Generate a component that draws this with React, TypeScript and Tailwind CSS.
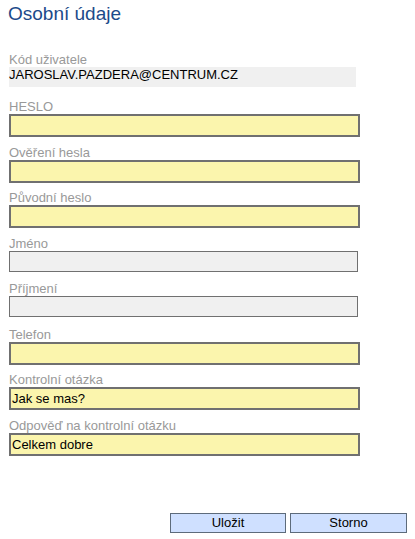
import React from "react";

type Field = { label: string; value?: string; kind: "edit" | "locked" };

const fields: Field[] = [
  { label: "HESLO", kind: "edit" },
  { label: "Ověření hesla", kind: "edit" },
  { label: "Původní heslo", kind: "edit" },
  { label: "Jméno", kind: "locked" },
  { label: "Příjmení", kind: "locked" },
  { label: "Telefon", kind: "edit" },
  { label: "Kontrolní otázka", value: "Jak se mas?", kind: "edit" },
  { label: "Odpověď na kontrolní otázku", value: "Celkem dobre", kind: "edit" },
];

function FormRow({ field }: { field: Field }) {
  return (
    <div className="h-[45.5px]">
      <div className="h-[15px] text-[13px] leading-[15px] text-[#999999]">{field.label}</div>
      {field.kind === "edit" ? (
        <input
          readOnly
          value={field.value ?? ""}
          className="block h-[23px] w-[351px] border-2 border-[#707070] bg-[#fbf5ad] px-px text-[13px] leading-[19px] text-black outline-none"
        />
      ) : (
        <input
          readOnly
          value=""
          className="block h-[21px] w-[349px] border border-[#707070] bg-[#f0f0f0] text-[13px] outline-none"
        />
      )}
    </div>
  );
}

export default function App() {
  return (
    <div className="h-[539px] w-[415px] bg-white font-['Liberation_Sans',Arial,sans-serif]">
      <div className="pl-[9px]">
        <h1 className="pt-[2px] -ml-[1px] text-[19px] leading-[24px] font-normal text-[#1c4a8a]">
          Osobní údaje
        </h1>

        <div className="mt-[27px]">
          <div className="h-[14px] text-[13px] leading-[14px] text-[#999999]">Kód uživatele</div>
          <div className="h-[20px] w-[347px] bg-[#f0f0f0] text-[13px] leading-[15px] text-black">
            JAROSLAV.PAZDERA@CENTRUM.CZ
          </div>
        </div>

        <div className="mt-[12px]">
          {fields.map((f) => (
            <FormRow key={f.label} field={f} />
          ))}
        </div>
      </div>

      <div className="mt-[50px] flex justify-end gap-[4px] pr-[8px]">
        <button className="h-[20px] w-[116px] border border-[#5d6b7b] bg-[#cfe0ff] text-[13px] leading-[18px] font-normal text-black">
          Uložit
        </button>
        <button className="h-[20px] w-[117px] border border-[#5d6b7b] bg-[#cfe0ff] text-[13px] leading-[18px] font-normal text-black">
          Storno
        </button>
      </div>
    </div>
  );
}
